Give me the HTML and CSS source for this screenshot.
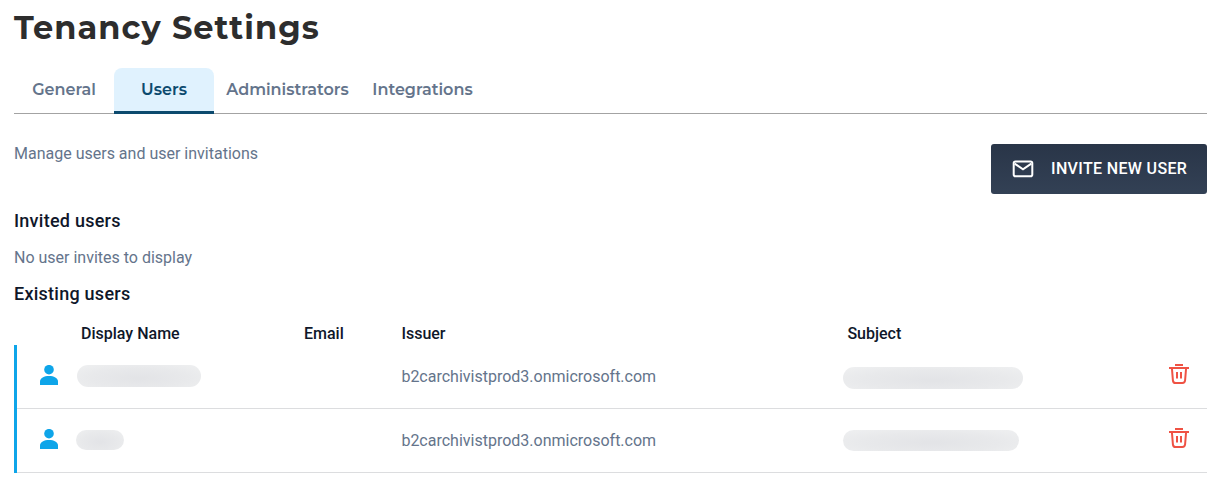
FILE: index.html
```html
<!DOCTYPE html>
<html lang="en">
<head>
<meta charset="utf-8">
<title>Tenancy Settings</title>
<link rel="stylesheet" href="styles.css">
</head>
<body>
<svg width="0" height="0" class="sprite" aria-hidden="true">
  <symbol id="person" viewBox="0 0 18 20"><circle cx="9" cy="4.700" r="4.800"/><path d="M0 20v-3.400C0 13 4.200 11 9 11s9 2 9 5.600V20z"/></symbol>
  <symbol id="trash" viewBox="0 0 20 20"><path d="M6 1h8M0 4h20M2.900 4l1 12.300Q4.100 19 6.600 19h6.800q2.500 0 2.700-2.700L17.100 4M8 8v6.500M12 8v6.500" fill="none" stroke="currentColor" stroke-width="2"/></symbol>
</svg>
<main class="page">
  <h1 class="title">Tenancy Settings</h1>
  <nav class="tabs">
    <a class="tab tab-general">General</a>
    <a class="tab tab-users active">Users</a>
    <a class="tab tab-admins">Administrators</a>
    <a class="tab tab-integrations">Integrations</a>
  </nav>
  <section class="intro">
    <p class="text">Manage users and user invitations</p>
    <button class="invite">
      <svg class="mail" viewBox="0 0 22 18"><rect x="1.700" y="1.500" width="18.600" height="14.700" rx="1.800"/><path d="M2.700 3.600 11 9.400l8.300-5.800"/></svg>
      <span>INVITE NEW USER</span>
    </button>
  </section>
  <h2 class="heading">Invited users</h2>
  <p class="text empty">No user invites to display</p>
  <h2 class="heading">Existing users</h2>
  <div class="table">
    <div class="row head"><span></span><span>Display Name</span><span>Email</span><span>Issuer</span><span>Subject</span><span></span></div>
    <div class="users">
      <div class="row user">
        <svg class="person"><use href="#person"/></svg>
        <span class="redacted name-long"></span><span></span>
        <span>b2carchivistprod3.onmicrosoft.com</span>
        <span class="redacted subject-long"></span>
        <svg class="trash"><use href="#trash"/></svg>
      </div>
      <div class="row user">
        <svg class="person"><use href="#person"/></svg>
        <span class="redacted name-short"></span><span></span>
        <span>b2carchivistprod3.onmicrosoft.com</span>
        <span class="redacted subject-short"></span>
        <svg class="trash"><use href="#trash"/></svg>
      </div>
    </div>
  </div>
</main>
</body>
</html>
```
FILE: styles.css
```css
* { box-sizing: border-box; }
body { margin: 0; background: #fff; color: #64748b; font: 16px/24px Roboto, sans-serif; }
h1, h2, p { margin: 0; }
.sprite { position: absolute; }
.page { padding: 0 15px 0 14px; }
.title { height: 68px; padding-top: 8px; color: #2d2d2d; font: 700 32px/40px Montserrat, Inter, sans-serif; letter-spacing: 1.06px; white-space: nowrap; }
.tabs { display: flex; height: 46px; border-bottom: 1px solid #a3a3a3; font: 600 16px/24px Montserrat, Inter, sans-serif; }
.tab { height: 46px; padding-top: 10px; text-align: center; white-space: nowrap; }
.tab-general { width: 100px; }
.tab-users { width: 100px; }
.tab-admins { width: 147px; }
.tab-integrations { width: 123px; }
.active { border-radius: 8px 8px 0 0; background: linear-gradient(to top, #0c4a6e 3px, #e0f2fe 3px); color: #0c4a6e; }
.intro { display: flex; justify-content: space-between; align-items: flex-start; height: 95px; padding-top: 30px; }
.intro .text { margin-top: -2px; }
.invite { display: flex; align-items: center; width: 216px; height: 50px; padding: 0 0 0 21px; gap: 17px; border: 0; border-radius: 3px; background: linear-gradient(#293548, #334155); color: #fff; font: 500 16px/24px Roboto, sans-serif; letter-spacing: .35px; white-space: nowrap; }
.mail { width: 22px; height: 18px; fill: none; stroke: #fff; stroke-width: 2; }
.heading { height: 24px; color: #0f172a; font: 500 18px/24px Roboto, sans-serif; letter-spacing: .25px; }
.empty { height: 49px; padding-top: 13px; }
.table { margin-top: 15px; }
.row { display: grid; grid-template-columns: 67px 223px 97.4px 446px 307.6px 1fr; align-items: center; }
.head { height: 24px; padding-top: 1px; color: #0f172a; font-weight: 500; }
.users { border-left: 3px solid #0ea5e9; }
.user { grid-template-columns: 64px 223px 97.4px 446px 307.6px 1fr; height: 64px; border-bottom: 1px solid #dcdddf; }
.person { width: 18px; height: 20px; margin: -4px 0 0 23px; fill: #0ea5e9; }
.trash { width: 20px; height: 20px; margin: -5px 0 0 14px; color: #ef5244; }
.redacted { border-radius: 11px; background: radial-gradient(ellipse at 50% 60%, #e3e4e7 5%, #e8e9eb 55%, #eff0f1); }
.name-long { width: 124px; height: 22px; margin: -2px 0 0 -4px; }
.name-short { width: 48px; height: 20px; margin: -1px 0 0 -5px; }
.subject-long { width: 180px; height: 22px; margin: 2px 0 0 -4px; }
.subject-short { width: 176px; height: 21px; margin-left: -4px; }
```
